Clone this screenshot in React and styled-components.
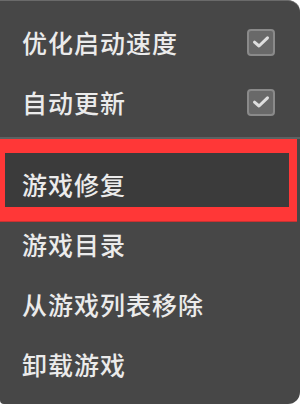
import styled, { createGlobalStyle } from 'styled-components'

const GlobalStyle = createGlobalStyle`
  html, body {
    margin: 0;
    padding: 0;
    background: #ffffff;
  }
  * {
    box-sizing: border-box;
  }
`

const topItems = [
  { label: '优化启动速度', checked: true },
  { label: '自动更新', checked: true },
]

const bottomItems = [
  { label: '游戏修复', marked: true },
  { label: '游戏目录' },
  { label: '从游戏列表移除' },
  { label: '卸载游戏' },
]

const CheckIcon = () => (
  <svg width="20" height="20" viewBox="0 0 20 20" fill="none">
    <path
      d="M3.5 10.2 L8 14 L16.5 5.8"
      stroke="#dedede"
      strokeWidth="3"
      strokeLinecap="round"
      strokeLinejoin="round"
    />
  </svg>
)

const App = () => {
  return (
    <>
      <GlobalStyle />
      <Menu>
        <Group $top={12}>
          {topItems.map((item) => (
            <Row key={item.label}>
              <Label>{item.label}</Label>
              {item.checked && (
                <Box>
                  <CheckIcon />
                </Box>
              )}
            </Row>
          ))}
        </Group>
        <Divider />
        <Group $top={16}>
          {bottomItems.map((item) => (
            <Row key={item.label} $marked={item.marked}>
              <Label>{item.label}</Label>
            </Row>
          ))}
        </Group>
      </Menu>
    </>
  )
}

const Menu = styled.div`
  width: 300px;
  height: 404px;
  background: #474747;
  border-radius: 0 12px 12px 4px;
  border-top: 1px solid #6a6a6a;
  overflow: hidden;
  display: flex;
  flex-direction: column;
  font-family: "Noto Sans CJK SC", "Noto Sans", sans-serif;
`

const Group = styled.div`
  display: flex;
  flex-direction: column;
  padding-top: ${(p) => p.$top - 1}px;
`

const Row = styled.div`
  position: relative;
  z-index: 0;
  height: 60px;
  display: flex;
  align-items: center;
  justify-content: space-between;
  padding: 0 25px 0 22px;

  ${(p) =>
    p.$marked &&
    `
    &::before {
      content: '';
      position: absolute;
      z-index: -1;
      top: -1px;
      bottom: 7px;
      left: 5px;
      right: 11px;
      background: #3b3b3b;
    }
    &::after {
      content: '';
      position: absolute;
      top: -15px;
      bottom: -7px;
      left: 0;
      right: 3px;
      border-style: solid;
      border-color: #ff3737;
      border-width: 14px 8px 14px 5px;
      box-shadow: 0 1px 0 #c93232;
    }
  `}
`

const Label = styled.span`
  color: #ebebeb;
  font-size: 25px;
  font-weight: 500;
  letter-spacing: 1px;
  line-height: 1;
`

const Box = styled.span`
  width: 28px;
  height: 27px;
  border: 2px solid #8a8a8a;
  border-radius: 4px;
  background: #696969;
  display: flex;
  align-items: center;
  justify-content: center;
`

const Divider = styled.div`
  height: 2px;
  margin-top: 5px;
  background: #5c6262;
`

export default App
